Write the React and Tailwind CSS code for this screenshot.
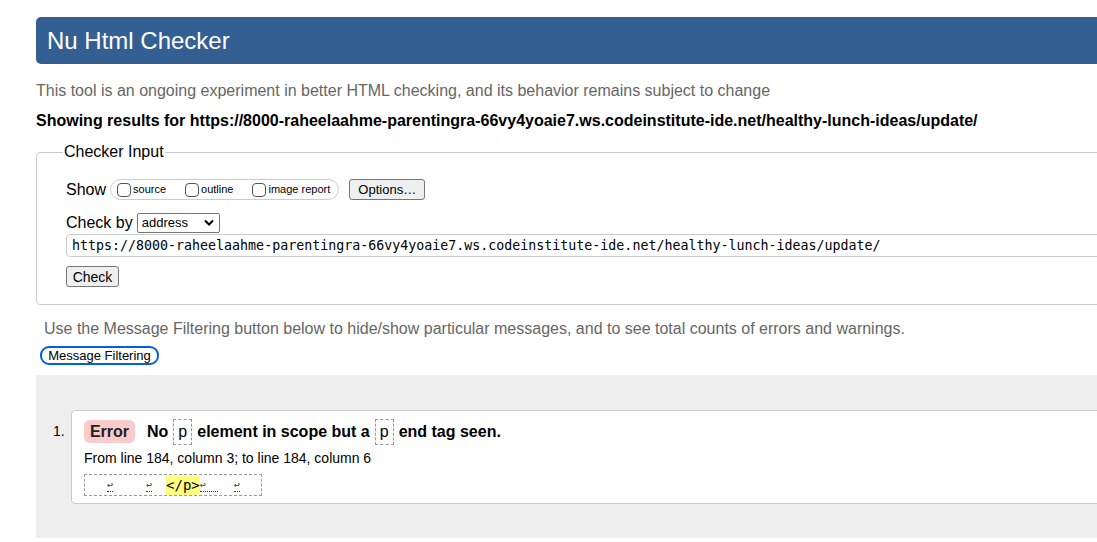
import React from 'react';

function Lf({ className = '' }) {
  return (
    <span className={`inline-block border-b border-dotted border-[#333] text-[10px] leading-[12px] text-[#333] ${className}`}>↩</span>
  );
}

function Tag({ children }) {
  return (
    <span className="mx-[5px] inline-flex h-[26px] items-center border border-dashed border-[#999] px-[4px] font-normal">{children}</span>
  );
}

function Box({ label, className = '' }) {
  return (
    <label className={`flex shrink-0 items-center whitespace-nowrap ${className}`}>
      <span className="h-[14px] w-[14px] shrink-0 rounded-[4px] border border-[#555]" />
      <span className="ml-[2px]">{label}</span>
    </label>
  );
}

export default function App() {
  return (
    <div className="w-[1097px] h-[542px] overflow-hidden bg-white font-['Liberation_Sans',Arial,sans-serif] text-[16px] text-black">
      <div className="w-[1140px] pt-[17px]">
        <h1 className="ml-[36px] flex h-[47px] items-center rounded-[5px] bg-[#335f93] pl-[11px] text-[24px] text-white">
          Nu Html Checker
        </h1>

        <p className="ml-[36px] mt-[17px] leading-[20px] text-[#666]">
          This tool is an ongoing experiment in better HTML checking, and its behavior remains subject to change
        </p>
        <p className="ml-[36px] mt-[10px] font-bold leading-[20px] whitespace-nowrap">
          Showing results for https://8000-raheelaahme-parentingra-66vy4yoaie7.ws.codeinstitute-ide.net/healthy-lunch-ideas/update/
        </p>

        <fieldset className="ml-[36px] mt-[11px] rounded-[4px] border border-[#ccc] px-[29px] pb-[15px]">
          <legend className="-ml-[3px] px-[1px] leading-[20px]">Checker Input</legend>

          <div className="mt-[17px] flex h-[21px] items-center">
            <span>Show</span>
            <div className="ml-[4px] flex h-[21px] shrink-0 items-center whitespace-nowrap rounded-full border border-[#ccc] pl-[6px] pr-[8px] text-[11px]">
              <Box label="source" />
              <Box label="outline" className="ml-[19px]" />
              <Box label="image report" className="ml-[19px]" />
            </div>
            <button className="ml-[10px] h-[21px] w-[76px] shrink-0 rounded-[3px] border border-[#767676] bg-[#efefef] text-[13px]">
              Options…
            </button>
          </div>

          <div className="mt-[12px] flex h-[21px] items-center">
            <span>Check by</span>
            <div className="ml-[4px] flex h-[20px] w-[83px] items-center justify-between rounded-[2px] border border-[#767676] pl-[4px] pr-[5px] text-[13px]">
              <span>address</span>
              <svg width="10" height="7" viewBox="0 0 10 7" fill="none" stroke="#000" strokeWidth="2">
                <path d="M1 1.5l4 4 4-4" />
              </svg>
            </div>
          </div>

          <div className="mt-[1px] flex h-[23px] items-center rounded-[4px] border border-[#ccc] pl-[5px] font-['DejaVu_Sans_Mono',monospace] text-[13.3px] whitespace-nowrap">
            https://8000-raheelaahme-parentingra-66vy4yoaie7.ws.codeinstitute-ide.net/healthy-lunch-ideas/update/
          </div>

          <button className="mt-[9px] h-[21px] w-[53px] rounded-[3px] border border-[#767676] bg-[#efefef] text-[14px]">
            Check
          </button>
        </fieldset>

        <p className="ml-[44px] mt-[14px] leading-[20px] text-[#666]">
          Use the Message Filtering button below to hide/show particular messages, and to see total counts of errors and warnings.
        </p>
        <button className="ml-[40px] mt-[7px] flex h-[19px] w-[119px] items-center justify-center rounded-[9px] border-2 border-[#0060df] text-[13px]">
          Message Filtering
        </button>

        <div className="ml-[36px] mt-[10px] bg-[#eee] pb-[34px] pt-[35px]">
          <ol className="flex">
            <li className="flex">
              <span className="mt-[13px] w-[35px] pl-[17px] text-[14px] leading-[17px]">1.</span>
              <div className="h-[94px] w-[1100px] rounded-[4px] border border-[#ccc] bg-white pl-[12px] pt-[7px]">
                <p className="flex h-[27px] items-center font-bold">
                  <span className="flex h-[23px] w-[51px] items-center justify-center rounded-[6px] bg-[#fbcaca] text-[#222]">Error</span>
                  <span className="ml-[12px]">No</span>
                  <Tag>p</Tag>
                  <span>element in scope but a</span>
                  <Tag>p</Tag>
                  <span>end tag seen.</span>
                </p>
                <p className="mt-[5px] text-[14px] leading-[17px]">From line 184, column 3; to line 184, column 6</p>
                <div className="mt-[7px] flex h-[22px] w-[178px] items-center border border-dashed border-[#999] font-['DejaVu_Sans_Mono',monospace] text-[14px]">
                  <Lf className="ml-[22px]" />
                  <Lf className="ml-[33px]" />
                  <span className="ml-[14px] bg-[#ffff80] leading-[20px]">&lt;/p&gt;</span>
                  <Lf className="w-[18px] tracking-[-1px]" />
                  <Lf className="ml-[16px]" />
                </div>
              </div>
            </li>
          </ol>
        </div>
      </div>
    </div>
  );
}
